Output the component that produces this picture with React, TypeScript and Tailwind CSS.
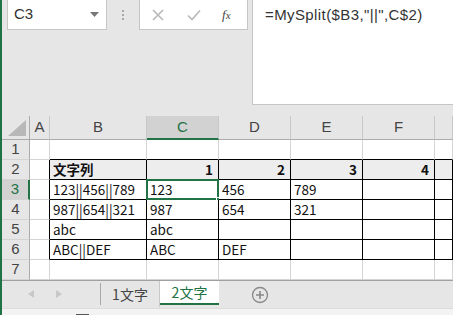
import React from 'react';

const FONT = { fontFamily: '"Liberation Sans", "Noto Sans CJK JP", sans-serif' };
const CELL_FONT = { fontFamily: '"Noto Sans CJK JP", "Liberation Sans", sans-serif' };

const cols = ['A', 'B', 'C', 'D', 'E', 'F', ''];
const widths = [20, 97, 72, 72, 72, 72, 18];

// data rows 1..7, columns A..G
const data: (string | null)[][] = [
  [null, null, null, null, null, null, null],
  [null, '文字列', '1', '2', '3', '4', ''],
  [null, '123||456||789', '123', '456', '789', '', ''],
  [null, '987||654||321', '987', '654', '321', '', ''],
  [null, 'abc', 'abc', '', '', '', ''],
  [null, 'ABC||DEF', 'ABC', 'DEF', '', '', ''],
  [null, null, null, null, null, null, null],
];

const inTable = (r: number, c: number) => r >= 1 && r <= 5 && c >= 1;

const Cell = ({ r, c }: { r: number; c: number }) => {
  const v = data[r][c];
  const t = inTable(r, c);
  const rightBlack = t || inTable(r, c + 1);
  const bottomBlack = t || inTable(r + 1, c);
  const header = r === 1 && c >= 1;
  const bold = r === 1;
  const right = r === 1 && c >= 2;
  return (
    <div
      className={`relative shrink-0 h-[20px] border-r border-b whitespace-nowrap text-[13.5px] leading-[19px] text-[#111] px-[3px] ${
        rightBlack ? 'border-r-black' : 'border-r-[#d4d4d4]'
      } ${bottomBlack ? 'border-b-black' : 'border-b-[#d4d4d4]'} ${header ? 'bg-[#ededed]' : 'bg-white'} ${
        bold ? 'font-bold' : ''
      } ${right ? 'text-right pr-[5px]' : ''}`}
      style={{ ...CELL_FONT, width: widths[c] }}
    >
      {v}
      {r === 2 && c === 2 && (
        <>
          <div className="absolute left-[-1px] top-[-1px] w-[73px] h-[21px] border-2 border-[#217346]" />
          <div className="absolute right-[-4px] bottom-[-4px] w-[6px] h-[6px] bg-[#217346] border border-white" />
        </>
      )}
    </div>
  );
};

export default function App() {
  return (
    <div className="w-[453px] h-[315px] overflow-hidden bg-[#e6e6e6] border-l-2 border-[#217346] flex flex-col" style={FONT}>
      {/* formula area */}
      <div className="h-[116px] flex shrink-0">
        <div className="ml-[5px] w-[100px] h-[30px] bg-white border border-t-0 border-[#c6c6c6] flex items-center justify-between pl-[6px] pr-[7px]">
          <span className="text-[15px] text-[#333]">C3</span>
          <svg width="9" height="5" viewBox="0 0 9 5">
            <path d="M0 0h9L4.5 5z" fill="#777" />
          </svg>
        </div>
        <div className="w-[32px] h-[30px] flex flex-col items-center justify-center gap-[2px]">
          <div className="w-[2px] h-[2px] bg-[#a8a8a8]" />
          <div className="w-[2px] h-[2px] bg-[#a8a8a8]" />
          <div className="w-[2px] h-[2px] bg-[#a8a8a8]" />
        </div>
        <div className="w-[109px] h-[30px] bg-white border border-t-0 border-[#c6c6c6] flex items-center pl-[12px]">
          <svg width="12" height="12" viewBox="0 0 12 12">
            <path d="M1 1l10 10M11 1L1 11" stroke="#b8b8b8" strokeWidth="1.6" />
          </svg>
          <svg width="14" height="12" viewBox="0 0 14 12" className="ml-[23px]">
            <path d="M1 6.5l4 4L13 1.5" stroke="#b8b8b8" strokeWidth="1.6" fill="none" />
          </svg>
          <span className="ml-[21px] italic text-[13px] text-[#444]" style={{ fontFamily: '"Liberation Serif", serif' }}>
            f<span className="text-[11px]">x</span>
          </span>
        </div>
        <div className="ml-[4px] flex-1 h-[105px] bg-white border border-t-0 border-r-0 border-[#c6c6c6] pl-[12px] pt-[4px] text-[15px] text-[#333] tracking-[0.4px]">
          =MySplit($B3,"||",C$2)
        </div>
      </div>

      {/* column headers */}
      <div className="flex h-[24px] shrink-0">
        <div className="w-[28px] shrink-0 h-full bg-[#e6e6e6] border-r border-b border-[#ababab] flex items-end justify-end pr-[3px] pb-[3px]">
          <svg width="18" height="16" viewBox="0 0 18 16">
            <path d="M18 0V16H0z" fill="#b8b8b8" />
          </svg>
        </div>
        {cols.map((c, i) => (
          <div
            key={i}
            className={`shrink-0 h-full border-r border-r-[#c8c8c8] flex items-center justify-center text-[15px] ${
              c === 'C' ? 'bg-[#d2d2d2] border-b-2 border-b-[#217346] text-[#217346]' : 'bg-[#e6e6e6] border-b border-b-[#ababab] text-[#444]'
            }`}
            style={{ width: widths[i] }}
          >
            {c}
          </div>
        ))}
      </div>

      {/* rows */}
      {data.map((_, r) => (
        <div key={r} className="flex h-[20px] shrink-0">
          <div
            className={`w-[28px] shrink-0 h-full border-b border-b-[#d4d4d4] flex items-center justify-center text-[15px] ${
              r === 2 ? 'bg-[#d2d2d2] border-r-2 border-r-[#217346] text-[#217346]' : 'bg-[#e6e6e6] border-r border-r-[#ababab] text-[#444]'
            }`}
          >
            {r + 1}
          </div>
          {cols.map((_, c) => (
            <Cell key={c} r={r} c={c} />
          ))}
        </div>
      ))}

      {/* sheet tabs */}
      <div className="h-[28px] shrink-0 bg-[#e6e6e6] border-t border-[#a0a0a0] flex items-start">
        <div className="w-[99px] h-[22px] flex items-center border-r border-[#a8a8a8] mt-[2px]">
          <svg width="6" height="8" viewBox="0 0 6 8" className="ml-[26px]">
            <path d="M6 0v8L0 4z" fill="#c8c8c8" />
          </svg>
          <svg width="6" height="8" viewBox="0 0 6 8" className="ml-[22px]">
            <path d="M0 0v8l6-4z" fill="#c8c8c8" />
          </svg>
        </div>
        <div className="w-[59px] h-[26px] flex items-center justify-center text-[14px] text-[#444] border-r border-[#c8c8c8]" style={CELL_FONT}>
          1文字
        </div>
        <div className="w-[59px] h-[24px] bg-white border-b-2 border-[#217346] flex items-center justify-center text-[14px] text-[#217346]" style={CELL_FONT}>
          2文字
        </div>
        <div className="ml-[32px] mt-[5px]">
          <svg width="18" height="18" viewBox="0 0 18 18">
            <circle cx="9" cy="9" r="7.5" fill="none" stroke="#888" strokeWidth="1.3" />
            <path d="M9 5v8M5 9h8" stroke="#888" strokeWidth="1.6" />
          </svg>
        </div>
      </div>

      {/* status bar */}
      <div className="flex-1 bg-[#f3f3f3] border-t border-[#dcdcdc] overflow-hidden relative">
        <div className="absolute top-[2px] left-[6px] text-[13px] text-[#444] whitespace-nowrap flex items-start gap-[16px]" style={CELL_FONT}>
          <span>準備完了</span>
          <span className="inline-block w-[13px] h-[11px] border border-[#555] mt-[3px]" />
          <span>アクセシビリティ: 問題を検討します</span>
        </div>
      </div>
    </div>
  );
}
